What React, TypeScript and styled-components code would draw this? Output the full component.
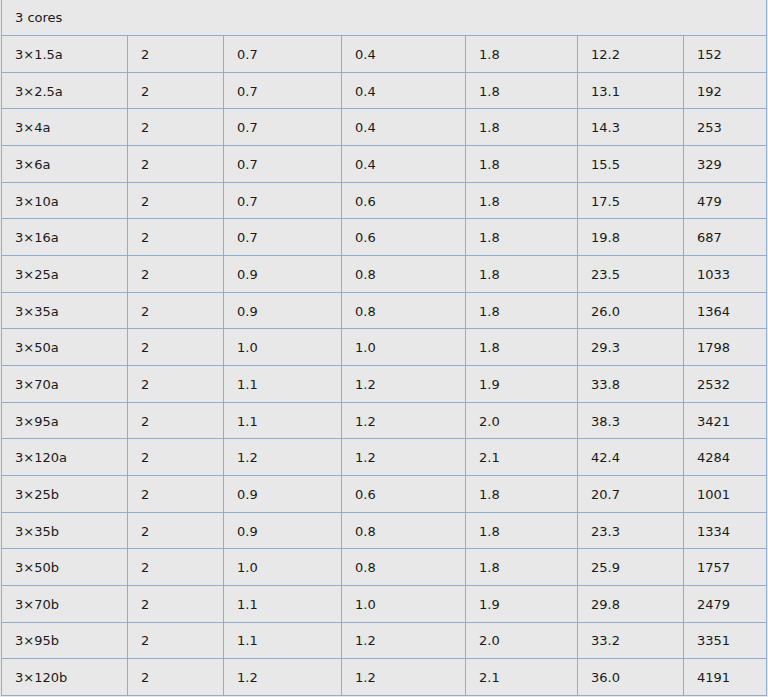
import React from "react";
import styled, { createGlobalStyle } from "styled-components";

const Global = createGlobalStyle`
  html, body { margin: 0; padding: 0; background: #e8e8e8; }
  body { font-family: "DejaVu Sans", Verdana, sans-serif; }
`;

const Table = styled.table`
  border-collapse: collapse;
  width: 766px;
  margin-left: 1px;
  table-layout: fixed;
  background: #e8e8e8;
  color: #1a1a1a;
  font-size: 13px;
`;

const Row = styled.tr<{ $h?: number }>`
  height: ${(p) => p.$h ?? 36.667}px;
`;

const Cell = styled.td`
  border: 1px solid #8eaecb;
  padding: 2px 0 0 13px;
  vertical-align: middle;
  white-space: nowrap;
  line-height: 16px;
`;

const HeadCell = styled(Cell)`
  border-top: none;
  padding-top: 0;
`;

const widths = [126, 96, 118, 124, 112, 106, 83];

const data: string[][] = [
  ["3×1.5a", "2", "0.7", "0.4", "1.8", "12.2", "152"],
  ["3×2.5a", "2", "0.7", "0.4", "1.8", "13.1", "192"],
  ["3×4a", "2", "0.7", "0.4", "1.8", "14.3", "253"],
  ["3×6a", "2", "0.7", "0.4", "1.8", "15.5", "329"],
  ["3×10a", "2", "0.7", "0.6", "1.8", "17.5", "479"],
  ["3×16a", "2", "0.7", "0.6", "1.8", "19.8", "687"],
  ["3×25a", "2", "0.9", "0.8", "1.8", "23.5", "1033"],
  ["3×35a", "2", "0.9", "0.8", "1.8", "26.0", "1364"],
  ["3×50a", "2", "1.0", "1.0", "1.8", "29.3", "1798"],
  ["3×70a", "2", "1.1", "1.2", "1.9", "33.8", "2532"],
  ["3×95a", "2", "1.1", "1.2", "2.0", "38.3", "3421"],
  ["3×120a", "2", "1.2", "1.2", "2.1", "42.4", "4284"],
  ["3×25b", "2", "0.9", "0.6", "1.8", "20.7", "1001"],
  ["3×35b", "2", "0.9", "0.8", "1.8", "23.3", "1334"],
  ["3×50b", "2", "1.0", "0.8", "1.8", "25.9", "1757"],
  ["3×70b", "2", "1.1", "1.0", "1.9", "29.8", "2479"],
  ["3×95b", "2", "1.1", "1.2", "2.0", "33.2", "3351"],
  ["3×120b", "2", "1.2", "1.2", "2.1", "36.0", "4191"],
];

export default function App() {
  return (
    <>
      <Global />
      <Table>
        <colgroup>
          {widths.map((w, i) => (
            <col key={i} style={{ width: w }} />
          ))}
        </colgroup>
        <tbody>
          <Row $h={35.667}>
            <HeadCell colSpan={7}>3 cores</HeadCell>
          </Row>
          {data.map((r, i) => (
            <Row key={i}>
              {r.map((c, j) => (
                <Cell key={j}>{c}</Cell>
              ))}
            </Row>
          ))}
        </tbody>
      </Table>
    </>
  );
}
